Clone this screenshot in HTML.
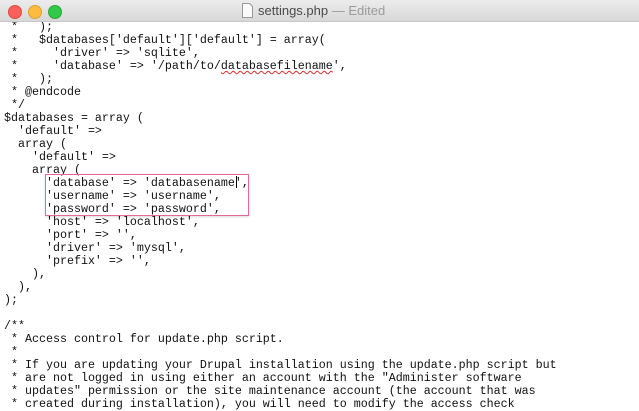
<!DOCTYPE html><html><head><style>
body{margin:0;width:639px;height:410px;overflow:hidden;background:#fff;position:relative}
.tb{position:absolute;left:0;top:0;width:639px;height:21px;background:linear-gradient(#ececec,#d8d8d8);border-bottom:1px solid #c8c8c8}
.d{position:absolute;top:5px;width:12px;height:12px;border-radius:50%}
.t{position:absolute;left:258px;top:3px;font:13px "Liberation Sans",sans-serif;color:#4a4a4a}
.t span{color:#9a9a9a}
pre{position:absolute;left:4px;top:21px;margin:0;font:11.67px/13px "Liberation Mono",monospace;color:#111}
.box{position:absolute;left:45px;top:174px;width:202px;height:40px;border:1px solid #e8679a;box-shadow:0 1px 2px rgba(0,0,0,.15)}
.sq{text-decoration:underline wavy #e03030;text-decoration-thickness:1px}
</style></head><body>
<pre> *   );
 *   $databases['default']['default'] = array(
 *     'driver' => 'sqlite',
 *     'database' => '/path/to/<span class="sq">databasefilename</span>',
 *   );
 * @endcode
 */
$databases = array (
  'default' =>
  array (
    'default' =>
    array (
      'database' => 'databasename',
      'username' => 'username',
      'password' => 'password',
      'host' => 'localhost',
      'port' => '',
      'driver' => 'mysql',
      'prefix' => '',
    ),
  ),
);

/**
 * Access control for update.php script.
 *
 * If you are updating your Drupal installation using the update.php script but
 * are not logged in using either an account with the "Administer software
 * updates" permission or the site maintenance account (the account that was
 * created during installation), you will need to modify the access check</pre>
<div class="box"></div>
<div style="position:absolute;left:236px;top:176px;width:1px;height:12px;background:#000"></div>
<div class="tb">
<div class="d" style="left:8px;background:#fc605c;border:0.5px solid #de4a45"></div>
<div class="d" style="left:28px;background:#fdbc40;border:0.5px solid #de9f34"></div>
<div class="d" style="left:48px;background:#34c84a;border:0.5px solid #27aa35"></div>
<svg style="position:absolute;left:242px;top:3px" width="11" height="15"><path d="M.5 .5h7l3 3v11h-10z" fill="#fafafa" stroke="#999"/></svg>
<div class="t">settings.php <span>— Edited</span></div>
</div>
</body></html>
